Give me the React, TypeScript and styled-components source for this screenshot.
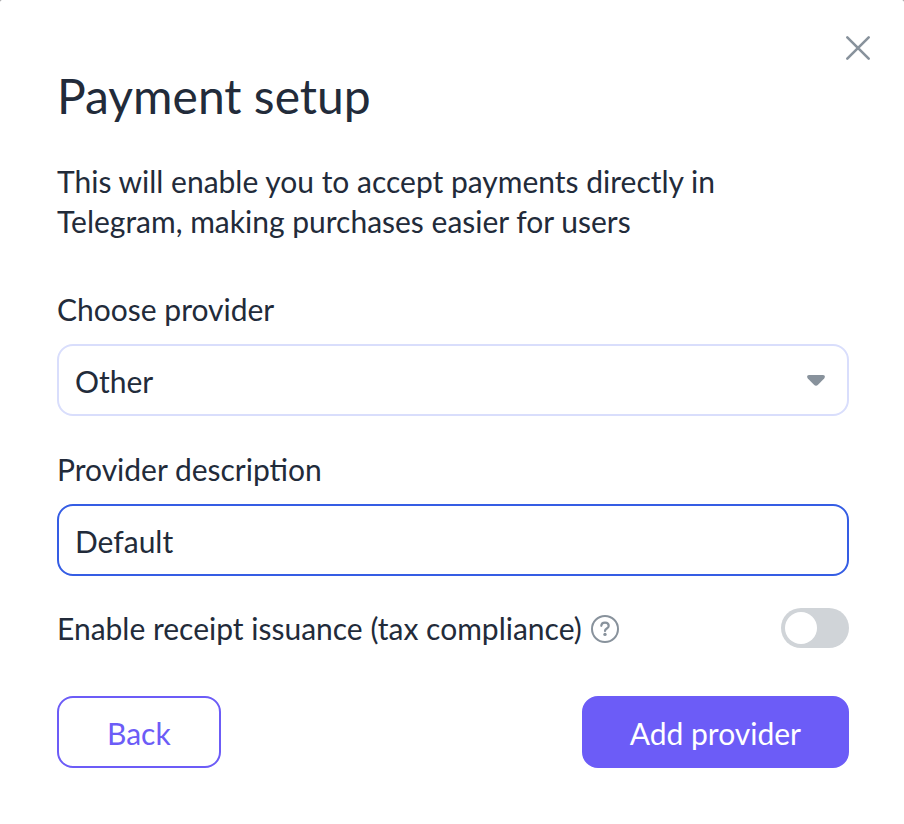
import React, { useState } from "react";
import styled, { createGlobalStyle } from "styled-components";

const GlobalStyle = createGlobalStyle`
  *, *::before, *::after { box-sizing: border-box; }
  body { margin: 0; background: #8c8c8e; }
  button, input, select { font: inherit; color: inherit; }
`;

const Dialog = styled.main`
  position: relative;
  min-height: 100vh;
  padding: 66px 55px 56px 57px;
  border-radius: 2px 2px 0 0;
  background: #ffffff;
  color: #222b3a;
  font-family: Lato, sans-serif;
  font-size: 30px;
  line-height: 40px;
`;

const CloseButton = styled.button`
  position: absolute;
  top: 32px;
  right: 30px;
  display: flex;
  padding: 0;
  border: 0;
  background: none;
  color: #88929c;
  cursor: pointer;
`;

const Title = styled.h1`
  margin: 0;
  font-size: 48px;
  line-height: 60px;
  font-weight: 400;
`;

const Intro = styled.p`
  max-width: 700px;
  margin: 35px 0 0;
`;

const Form = styled.form`
  display: flex;
  flex-direction: column;
`;

const Field = styled.div<{ $gap: number }>`
  display: flex;
  flex-direction: column;
  gap: 15px;
  margin-top: ${(p) => p.$gap}px;
`;

const controlStyle = `
  width: 100%;
  height: 72px;
  padding: 2px 16px 0;
  border-radius: 16px;
  background: #ffffff;
  outline: none;
`;

const SelectWrap = styled.div`
  display: grid;
  align-items: center;
  > * { grid-area: 1 / 1; }
  svg { justify-self: end; margin-right: 24px; pointer-events: none; }
`;

const Select = styled.select`
  ${controlStyle}
  appearance: none;
  border: 2px solid #d9defc;
`;

const TextInput = styled.input`
  ${controlStyle}
  border: 2px solid #355de4;
`;

const SwitchRow = styled.div`
  display: flex;
  align-items: center;
  margin-top: 32px;
`;

const HelpButton = styled.button`
  display: flex;
  margin-left: 9px;
  padding: 2px 0 0;
  border: 0;
  background: none;
  color: #88929c;
  cursor: help;
`;

const Switch = styled.input`
  appearance: none;
  display: flex;
  align-items: center;
  width: 68px;
  height: 40px;
  margin: 0 0 0 auto;
  padding: 4px;
  border-radius: 20px;
  background: #d0d4d8;
  cursor: pointer;
  &::before {
    content: "";
    width: 32px;
    height: 32px;
    border-radius: 50%;
    background: #ffffff;
  }
  &:checked { justify-content: flex-end; background: #6c5cf7; }
`;

const Actions = styled.div`
  display: flex;
  justify-content: space-between;
  margin-top: 48px;
`;

const Button = styled.button<{ $primary?: boolean }>`
  height: 72px;
  padding: 2px ${(p) => (p.$primary ? 46 : 48)}px 0;
  border: 2px solid #6c5cf7;
  border-radius: 16px;
  background: ${(p) => (p.$primary ? "#6c5cf7" : "#ffffff")};
  color: ${(p) => (p.$primary ? "#ffffff" : "#6c5cf7")};
  cursor: pointer;
`;

export default function App() {
  const [description, setDescription] = useState("Default");
  const [receipts, setReceipts] = useState(false);

  return (
    <>
      <GlobalStyle />
      <Dialog role="dialog" aria-labelledby="dialog-title">
        <CloseButton type="button" aria-label="Close">
          <svg width="32" height="32" viewBox="0 0 32 32" fill="none" stroke="currentColor" strokeWidth="2.6" strokeLinecap="round">
            <path d="M5.3 5.3 26.7 26.7M26.7 5.3 5.3 26.7" />
          </svg>
        </CloseButton>
        <Title id="dialog-title">Payment setup</Title>
        <Intro>This will enable you to accept payments directly in Telegram, making purchases easier for users</Intro>
        <Form onSubmit={(e) => e.preventDefault()}>
          <Field $gap={48}>
            <label htmlFor="provider">Choose provider</label>
            <SelectWrap>
              <Select id="provider" defaultValue="Other">
                <option>Other</option>
              </Select>
              <svg width="18" height="12" viewBox="0 0 18 12" fill="#88929c">
                <path d="M2 1H16C18 1 18.4 3 17.2 4.4L11 10.7Q9 12.6 7 10.7L.8 4.4C-.4 3 0 1 2 1Z" />
              </svg>
            </SelectWrap>
          </Field>
          <Field $gap={33}>
            <label htmlFor="description">Provider description</label>
            <TextInput id="description" value={description} onChange={(e) => setDescription(e.target.value)} />
          </Field>
          <SwitchRow>
            <label htmlFor="receipts">Enable receipt issuance (tax compliance)</label>
            <HelpButton type="button" aria-label="About receipt issuance">
              <svg width="28" height="28" viewBox="0 0 28 28" fill="none" stroke="currentColor" strokeWidth="2" strokeLinecap="round">
                <circle cx="14" cy="14" r="13" />
                <path d="M10.3 10.8C10.5 6.4 17.7 6.6 17.7 10.9C17.7 13.6 14 13.4 14 16" strokeWidth="2.2" />
                <circle cx="14" cy="19.4" r="1.7" fill="currentColor" stroke="none" />
              </svg>
            </HelpButton>
            <Switch id="receipts" type="checkbox" role="switch" checked={receipts} onChange={(e) => setReceipts(e.target.checked)} />
          </SwitchRow>
          <Actions>
            <Button type="button">Back</Button>
            <Button type="submit" $primary>Add provider</Button>
          </Actions>
        </Form>
      </Dialog>
    </>
  );
}
